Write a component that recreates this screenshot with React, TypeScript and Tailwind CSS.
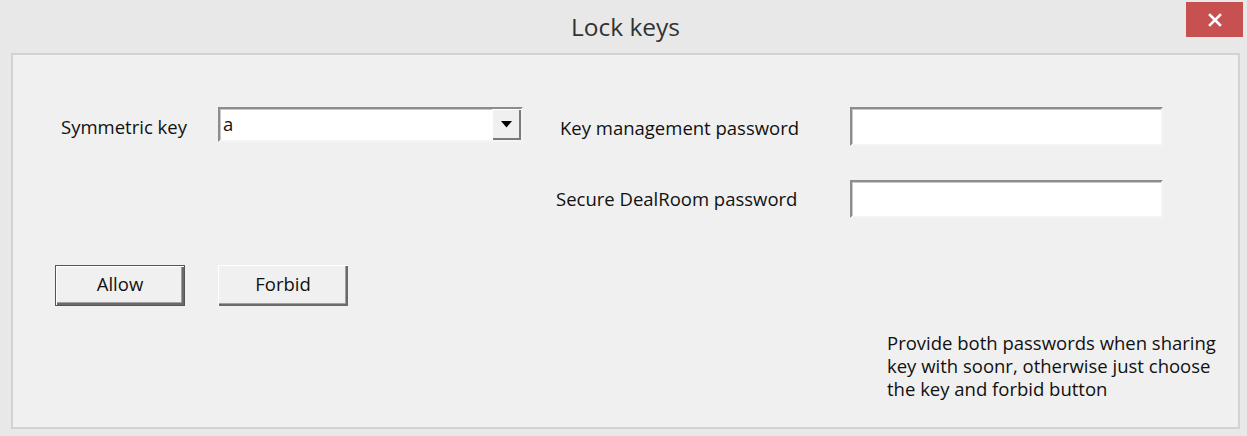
import React from 'react';

const font = { fontFamily: '"Open Sans", "Noto Sans", sans-serif' };

// sunken 3D edit field, classic Windows look
const Sunken: React.FC<{ className?: string; children?: React.ReactNode }> = ({ className = '', children }) => (
  <div
    className={`bg-white border-2 border-t-[#8c8c8c] border-l-[#8c8c8c] border-b-[#f4f4f4] border-r-[#f4f4f4] shadow-[inset_1px_1px_0_#c8c8c8] ${className}`}
  >
    {children}
  </div>
);

const PushButton: React.FC<{ label: string; isDefault?: boolean }> = ({ label, isDefault }) => (
  <button
    className={`w-[130px] h-[41px] bg-[#f0f0f0] text-[18.5px] text-[#111] leading-none pb-[3px] ${
      isDefault
        ? 'border border-[#555] shadow-[inset_1px_1px_0_#fff,inset_-2px_-2px_0_#6a6a6a,inset_-3px_-3px_0_#a0a0a0]'
        : 'shadow-[inset_1px_1px_0_#fff,inset_-2px_-2px_0_#6a6a6a,inset_-3px_-3px_0_#a0a0a0]'
    }`}
  >
    {label}
  </button>
);

const App: React.FC = () => {
  return (
    <div className="w-[1247px] h-[436px] bg-[#e8e8e8] flex flex-col" style={font}>
      {/* Title bar */}
      <div className="h-[53px] grid grid-cols-[1fr_auto_1fr] items-start">
        <div />
        <div className="pt-[10px] text-[24.5px] text-[#333] leading-[34px] pl-[4px]">Lock keys</div>
        <div className="flex justify-end pr-[4px] pt-[2px]">
          <button className="w-[57px] h-[35px] bg-[#c75050] flex items-center justify-center">
            <svg width="14" height="14" viewBox="0 0 14 14">
              <path d="M2 2 L12 12 M12 2 L2 12" stroke="white" strokeWidth="2.6" strokeLinecap="square" />
            </svg>
          </button>
        </div>
      </div>

      {/* Client area */}
      <div className="ml-[11px] mr-[7px] h-[376px] border-2 border-[#d2d2d2] bg-[#f0f0f0] text-[18.5px] text-[#111] flex flex-col">
        <div className="flex items-start pt-[52px]">
          <div className="flex items-center ml-[48px]">
            <span className="w-[157px] pt-[4px]">Symmetric key</span>
            <Sunken className="w-[305px] h-[35px] flex items-stretch">
              <span className="flex-1 pl-[3px] leading-[30px]">a</span>
              <div className="w-[29px] bg-[#f0f0f0] flex items-center justify-center shadow-[inset_1px_1px_0_#fff,inset_-2px_-2px_0_#7a7a7a]">
                <svg width="11" height="7" viewBox="0 0 11 7">
                  <path d="M0 0 H11 L5.5 6.5 Z" fill="#000" />
                </svg>
              </div>
            </Sunken>
          </div>

          <div className="ml-[33px] grid grid-cols-[294px_313px] gap-y-[34px] items-center">
            <span className="pl-[4px] pt-[2px]">Key management password</span>
            <Sunken className="h-[39px]" />
            <span>Secure DealRoom password</span>
            <Sunken className="h-[38px]" />
          </div>
        </div>

        <div className="flex gap-[33px] ml-[42px] mt-[47px]">
          <PushButton label="Allow" isDefault />
          <PushButton label="Forbid" />
        </div>

        <p className="ml-[874px] mt-[25px] w-[345px] leading-[23px]">
          Provide both passwords when sharing key with soonr, otherwise just choose the key and forbid button
        </p>
      </div>
    </div>
  );
};

export default App;
